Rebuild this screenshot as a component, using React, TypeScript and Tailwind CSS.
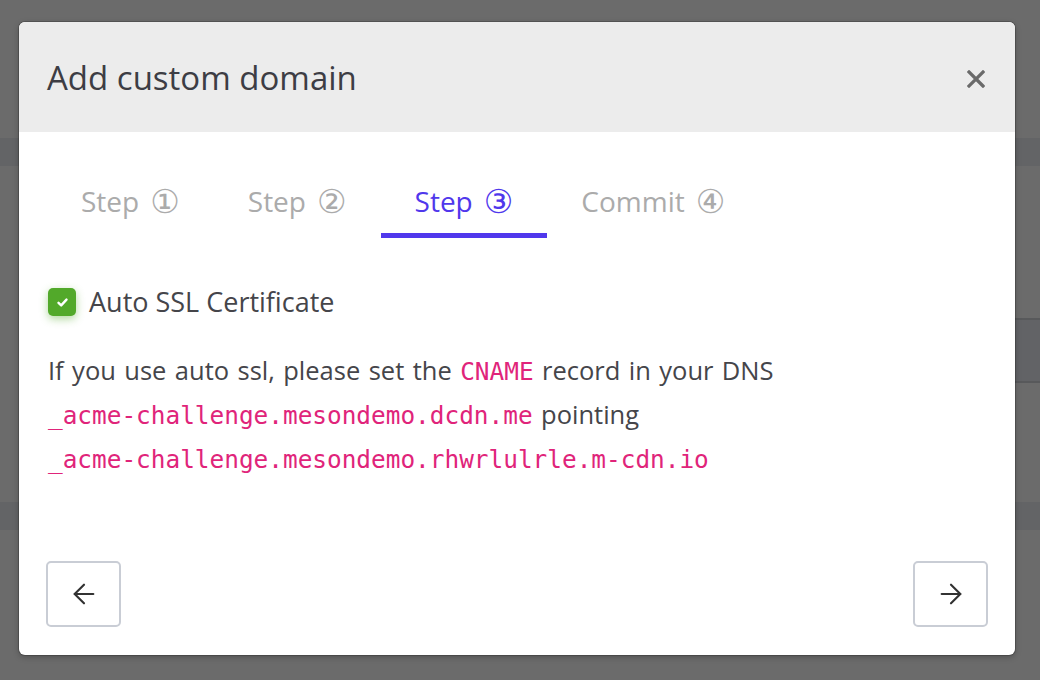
import { ArrowLeft, ArrowRight } from "lucide-react";

const tabs = [
  { label: "Step", num: "①", active: false },
  { label: "Step", num: "②", active: false },
  { label: "Step", num: "③", active: true },
  { label: "Commit", num: "④", active: false },
];

function CloseIcon() {
  return (
    <svg width="18" height="18" viewBox="0 0 18 18" fill="none">
      <path d="M2 2L16 16M16 2L2 16" stroke="#6a6a6a" strokeWidth="3.2" strokeLinecap="square" />
    </svg>
  );
}

export default function App() {
  return (
    <div className="relative h-[680px] w-full overflow-hidden bg-[#6b6b6b] font-['Open_Sans',sans-serif]">
      {/* page behind the overlay */}
      <div className="h-[138px]" />
      <div className="h-[28px] bg-[#636466]" />
      <div className="h-[152px]" />
      <div className="flex h-[65px]">
        <div className="flex-1" />
        <div className="w-[140px] border-y-2 border-[#58595b] bg-[#626366]" />
      </div>
      <div className="h-[119px]" />
      <div className="h-[28px] bg-[#636466]" />

      {/* modal */}
      <div className="absolute left-[19px] top-[22px] flex h-[633px] w-[996px] flex-col overflow-hidden rounded-[6px] bg-white shadow-[0_0_0_1px_rgba(0,0,0,0.18),0_2px_6px_rgba(0,0,0,0.25)]">
        <div className="flex h-[110px] items-center justify-between bg-[#ececec] pl-[28px] pr-[30px]">
          <h2 className="text-[33px] leading-none text-[#3d3d44]">Add custom domain</h2>
          <button className="pt-[3px]">
            <CloseIcon />
          </button>
        </div>

        <div className="ml-[28px] mt-[51px] flex">
          {tabs.map((t) => (
            <div
              key={t.num}
              className={
                t.active
                  ? "flex items-center gap-[11px] border-b-[5px] border-[#5038ec] px-[34px] pb-[14px] text-[28px] leading-[36px] text-[#5038ec]"
                  : "flex items-center gap-[11px] border-b-[5px] border-transparent px-[34px] pb-[14px] text-[28px] leading-[36px] text-[#ababab]"
              }
            >
              {t.label}
              <span className="font-['DejaVu_Sans',sans-serif] text-[33px] leading-none">{t.num}</span>
            </div>
          ))}
        </div>

        <div className="ml-[29px] mt-[50px] flex items-center gap-[13px]">
          <div className="flex h-[28px] w-[28px] items-center justify-center rounded-[5px] bg-[#52a92a] shadow-[0_3px_8px_rgba(82,169,42,0.45)]">
            <svg width="13" height="13" viewBox="0 0 13 13" fill="none">
              <path d="M2.5 6.8L5.2 9.4L10.5 3.6" stroke="white" strokeWidth="2.4" strokeLinecap="round" strokeLinejoin="round" />
            </svg>
          </div>
          <span className="text-[27px] leading-[28px] text-[#45454a]">Auto SSL Certificate</span>
        </div>

        <p className="ml-[29px] mt-[33px] text-[25.5px] leading-[42px] text-[#45454a] [word-spacing:1.8px]">
          If you use auto ssl, please set the{" "}
          <code className="font-['DejaVu_Sans_Mono',monospace] text-[24.4px] text-[#e0247a] [word-spacing:0]">CNAME</code>{" "}
          record in your DNS
          <br />
          <code className="font-['DejaVu_Sans_Mono',monospace] text-[24.4px] text-[#e0247a] [word-spacing:0]">
            _acme-challenge.mesondemo.dcdn.me
          </code>{" "}
          pointing
          <br />
          <code className="font-['DejaVu_Sans_Mono',monospace] text-[24.4px] text-[#e0247a] [word-spacing:0]">
            _acme-challenge.mesondemo.rhwrlulrle.m-cdn.io
          </code>
        </p>

        <div className="mt-auto flex justify-between px-[27px] pb-[28px]">
          <button className="flex h-[66px] w-[75px] items-center justify-center rounded-[5px] border-2 border-[#c9cdd5] text-[#333]">
            <ArrowLeft size={32} strokeWidth={1.6} />
          </button>
          <button className="flex h-[66px] w-[75px] items-center justify-center rounded-[5px] border-2 border-[#c9cdd5] text-[#333]">
            <ArrowRight size={32} strokeWidth={1.6} />
          </button>
        </div>
      </div>
    </div>
  );
}
